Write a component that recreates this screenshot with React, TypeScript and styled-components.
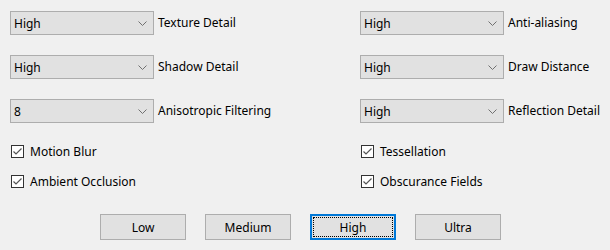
import React from 'react';
import styled, { createGlobalStyle } from 'styled-components';

const GlobalStyle = createGlobalStyle`
  html, body {
    margin: 0;
    padding: 0;
    background: #f0f0f0;
  }
  body {
    font-family: 'Noto Sans', 'Open Sans', sans-serif;
    font-size: 12px;
    color: #000;
  }
`;

const Window = styled.div`
  width: 610px;
  height: 250px;
  box-sizing: border-box;
  padding: 11px 0 0 10px;
`;

const Grid = styled.div`
  display: grid;
  grid-template-columns: 350px auto;
  row-gap: 20px;
`;

const Field = styled.div`
  display: flex;
  align-items: center;
  gap: 4px;
  height: 24px;
`;

const Combo = styled.div`
  width: 144px;
  height: 24px;
  box-sizing: border-box;
  border: 1px solid #adadad;
  background: #e1e1e1;
  display: flex;
  align-items: center;
  justify-content: space-between;
  padding: 0 6px 0 3px;
`;

const Label = styled.span`
  white-space: nowrap;
  line-height: 16px;
`;

const Checks = styled.div`
  display: grid;
  grid-template-columns: 350px auto;
  row-gap: 17px;
  margin-top: 22px;
  padding-left: 1px;
`;

const CheckRow = styled.label`
  display: flex;
  align-items: center;
  gap: 6px;
  height: 13px;
`;

const Box = styled.span`
  width: 13px;
  height: 13px;
  box-sizing: border-box;
  border: 1px solid #333;
  background: #fff;
  display: flex;
  align-items: center;
  justify-content: center;
`;

const Buttons = styled.div`
  display: flex;
  gap: 19px;
  margin-top: 26px;
  padding-left: 90px;
`;

const Button = styled.button<{ $focused?: boolean }>`
  width: 86px;
  height: 26px;
  box-sizing: border-box;
  background: #e1e1e1;
  border: ${({ $focused }) => ($focused ? '2px solid #0078d7' : '1px solid #adadad')};
  font: inherit;
  color: #000;
  padding: 0;
  position: relative;
  display: flex;
  align-items: center;
  justify-content: center;

  &::after {
    content: '';
    display: ${({ $focused }) => ($focused ? 'block' : 'none')};
    position: absolute;
    inset: 1px;
    border: 1px dotted #000;
  }
`;

const Chevron = () => (
  <svg width="9" height="5" viewBox="0 0 9 5">
    <path d="M0.5 0.5 L4.5 4.5 L8.5 0.5" fill="none" stroke="#707070" strokeWidth="1" />
  </svg>
);

const Check = () => (
  <svg width="11" height="11" viewBox="0 0 11 11">
    <path d="M1.5 5.5 L4 8 L9.5 2.5" fill="none" stroke="#555" strokeWidth="1.2" />
  </svg>
);

const selects: [string, string][] = [
  ['High', 'Texture Detail'],
  ['High', 'Anti-aliasing'],
  ['High', 'Shadow Detail'],
  ['High', 'Draw Distance'],
  ['8', 'Anisotropic Filtering'],
  ['High', 'Reflection Detail'],
];

const checks = ['Motion Blur', 'Tessellation', 'Ambient Occlusion', 'Obscurance Fields'];

const presets = ['Low', 'Medium', 'High', 'Ultra'];

export default function App() {
  return (
    <Window>
      <GlobalStyle />
      <Grid>
        {selects.map(([value, label]) => (
          <Field key={label}>
            <Combo>
              <span>{value}</span>
              <Chevron />
            </Combo>
            <Label>{label}</Label>
          </Field>
        ))}
      </Grid>
      <Checks>
        {checks.map((c) => (
          <CheckRow key={c}>
            <Box>
              <Check />
            </Box>
            <Label>{c}</Label>
          </CheckRow>
        ))}
      </Checks>
      <Buttons>
        {presets.map((p) => (
          <Button key={p} $focused={p === 'High'}>
            {p}
          </Button>
        ))}
      </Buttons>
    </Window>
  );
}
